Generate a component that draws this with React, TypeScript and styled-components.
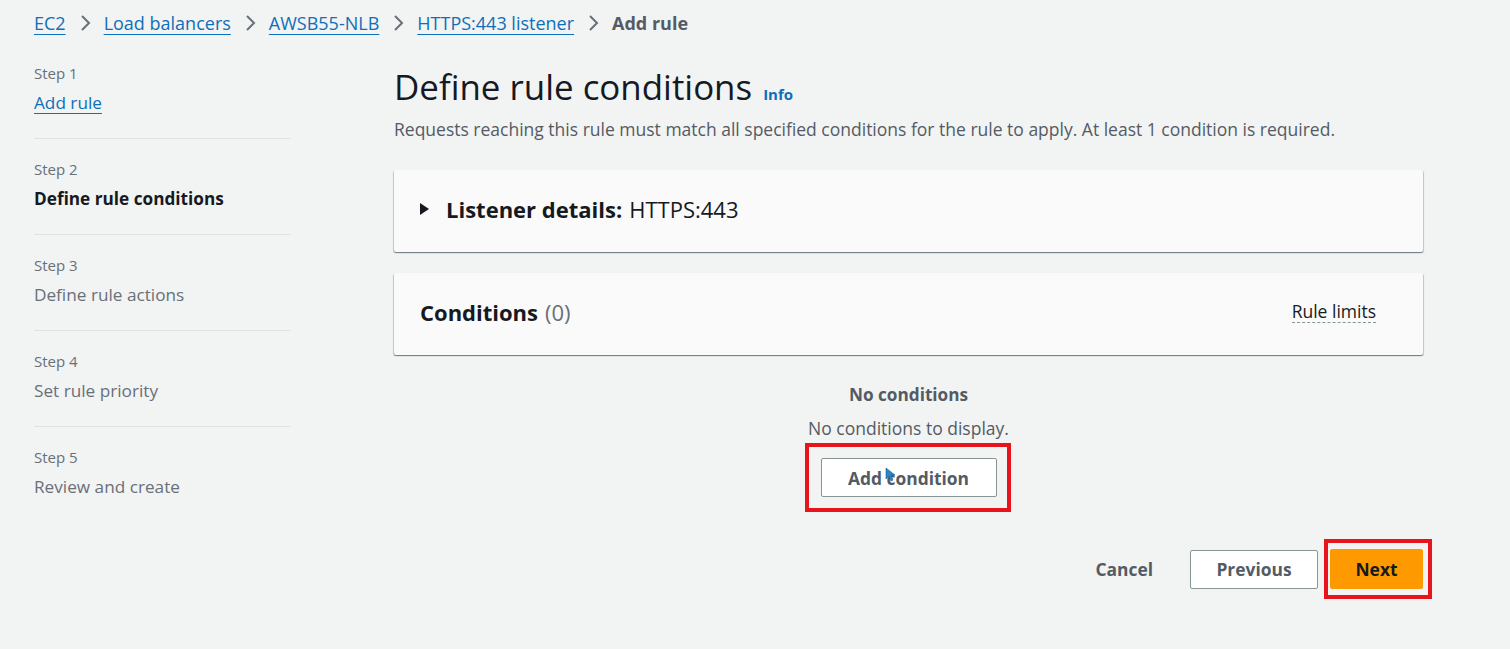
import React from "react";
import styled, { createGlobalStyle } from "styled-components";

const Global = createGlobalStyle`
  html, body { margin: 0; padding: 0; background: #f2f3f3; }
  body { font-family: "Open Sans", "Noto Sans", Arial, sans-serif; color: #16191f; }
  * { box-sizing: border-box; }
`;

const Page = styled.div`
  width: 1510px;
  min-height: 649px;
  padding: 11px 87px 0 34px;
`;

const Breadcrumbs = styled.nav`
  display: flex;
  align-items: center;
  gap: 13px;
  height: 24px;
  font-size: 18px;
  line-height: 24px;
`;

const Crumb = styled.a`
  color: #0f6fb8;
  text-decoration: underline;
  text-underline-offset: 4px;
  text-decoration-thickness: 1px;
`;

const Current = styled.span`
  color: #545b64;
  font-weight: 700;
`;

const Chevron = () => (
  <svg width="12" height="18" viewBox="0 0 12 18">
    <path d="M3 2 L10 9 L3 16" fill="none" stroke="#687078" strokeWidth="2" />
  </svg>
);

const Layout = styled.div`
  display: grid;
  grid-template-columns: 257px 1fr;
  column-gap: 103px;
  margin-top: 27px;
`;

const StepNav = styled.ol`
  list-style: none;
  margin: 0;
  padding: 0;
`;

const StepItem = styled.li`
  padding: 19px 0 22px;
  border-bottom: 1px solid #dfe3e5;
  &:first-child { padding-top: 0; }
  &:last-child { border-bottom: none; }
`;

const StepLabel = styled.div`
  font-size: 15px;
  line-height: 22px;
  color: #687078;
`;

const StepTitle = styled.div<{ $state: "link" | "active" | "idle" }>`
  margin-top: 6px;
  font-size: 17.2px;
  line-height: 26px;
  color: ${(p) => (p.$state === "link" ? "#0f6fb8" : p.$state === "active" ? "#16191f" : "#687078")};
  font-weight: ${(p) => (p.$state === "active" ? 700 : 400)};
  text-decoration: ${(p) => (p.$state === "link" ? "underline" : "none")};
  text-underline-offset: 4px;
`;

const Main = styled.main`
  display: flex;
  flex-direction: column;
  margin-top: 3px;
`;

const TitleRow = styled.div`
  display: flex;
  align-items: baseline;
  gap: 11px;
`;

const Heading = styled.h1`
  margin: 0;
  font-size: 34.9px;
  line-height: 44px;
  font-weight: 400;
  color: #16191f;
`;

const InfoLink = styled.a`
  font-size: 15px;
  font-weight: 700;
  color: #0f6fb8;
`;

const Description = styled.p`
  margin: 8px 0 0;
  font-size: 17.5px;
  line-height: 24px;
  color: #545b64;
`;

const Card = styled.section<{ $gap: number }>`
  margin-top: ${(p) => p.$gap}px;
  height: 82px;
  background: #fafafa;
  border-radius: 2px;
  box-shadow: 0 1px 1px 0 rgba(0, 28, 36, 0.35), 1px 1px 1px 0 rgba(0, 28, 36, 0.18),
    -1px 1px 1px 0 rgba(0, 28, 36, 0.18);
  display: flex;
  align-items: center;
  justify-content: space-between;
  padding: 0 47px 5px 26px;
`;

const CardTitle = styled.h2`
  margin: 0;
  display: flex;
  align-items: center;
  font-size: 22px;
  line-height: 30px;
  font-weight: 700;
  color: #16191f;
`;

const Caret = styled.span`
  width: 0;
  height: 0;
  border-top: 6px solid transparent;
  border-bottom: 6px solid transparent;
  border-left: 9px solid #16191f;
  margin-right: 17px;
`;

const Light = styled.span<{ $muted?: boolean }>`
  font-weight: 400;
  color: ${(p) => (p.$muted ? "#687078" : "#16191f")};
  margin-left: 7px;
`;

const RuleLimits = styled.span`
  font-size: 17.5px;
  color: #16191f;
  border-bottom: 1px dashed #879596;
  line-height: 22px;
`;

const Empty = styled.div`
  display: flex;
  flex-direction: column;
  align-items: center;
  margin-top: 28px;
`;

const EmptyTitle = styled.div`
  font-size: 17.2px;
  line-height: 24px;
  font-weight: 700;
  color: #545b64;
`;

const EmptyText = styled.div`
  margin-top: 9px;
  font-size: 17.5px;
  line-height: 24px;
  color: #545b64;
`;

const Highlight = styled.span`
  position: relative;
  display: inline-flex;
`;

const RedBox = styled.span<{ $t: number; $r: number; $b: number; $l: number }>`
  position: absolute;
  top: ${(p) => -p.$t}px;
  right: ${(p) => -p.$r}px;
  bottom: ${(p) => -p.$b}px;
  left: ${(p) => -p.$l}px;
  border: 4px solid #e8141b;
  pointer-events: none;
`;

const Button = styled.button<{ $variant: "normal" | "primary" | "link"; $w?: number }>`
  height: ${(p) => (p.$variant === "primary" ? 40 : 39)}px;
  width: ${(p) => (p.$w ? `${p.$w}px` : "auto")};
  padding: 0 24px;
  font-family: inherit;
  font-size: 17.4px;
  font-weight: 700;
  border-radius: 2px;
  cursor: pointer;
  border: 1px solid
    ${(p) => (p.$variant === "normal" ? "#879596" : p.$variant === "primary" ? "#ff9900" : "transparent")};
  background: ${(p) => (p.$variant === "normal" ? "#ffffff" : p.$variant === "primary" ? "#ff9900" : "transparent")};
  color: ${(p) => (p.$variant === "primary" ? "#16191f" : "#545b64")};
`;

const AddWrap = styled.div`
  margin-top: 18px;
`;

const Cursor = styled.svg`
  position: absolute;
  left: 64px;
  top: 9px;
`;

const Footer = styled.div`
  display: flex;
  justify-content: flex-end;
  align-items: center;
  gap: 12px;
  margin-top: 52px;
`;

export default function App() {
  const steps: { label: string; title: string; state: "link" | "active" | "idle" }[] = [
    { label: "Step 1", title: "Add rule", state: "link" },
    { label: "Step 2", title: "Define rule conditions", state: "active" },
    { label: "Step 3", title: "Define rule actions", state: "idle" },
    { label: "Step 4", title: "Set rule priority", state: "idle" },
    { label: "Step 5", title: "Review and create", state: "idle" },
  ];
  return (
    <>
      <Global />
      <Page>
        <Breadcrumbs>
          <Crumb>EC2</Crumb>
          <Chevron />
          <Crumb>Load balancers</Crumb>
          <Chevron />
          <Crumb>AWSB55-NLB</Crumb>
          <Chevron />
          <Crumb>HTTPS:443 listener</Crumb>
          <Chevron />
          <Current>Add rule</Current>
        </Breadcrumbs>
        <Layout>
          <StepNav>
            {steps.map((s) => (
              <StepItem key={s.label}>
                <StepLabel>{s.label}</StepLabel>
                <StepTitle $state={s.state}>{s.title}</StepTitle>
              </StepItem>
            ))}
          </StepNav>
          <Main>
            <TitleRow>
              <Heading>Define rule conditions</Heading>
              <InfoLink>Info</InfoLink>
            </TitleRow>
            <Description>
              Requests reaching this rule must match all specified conditions for the rule to apply. At least 1
              condition is required.
            </Description>
            <Card $gap={29}>
              <CardTitle>
                <Caret />
                Listener details:<Light>HTTPS:443</Light>
              </CardTitle>
            </Card>
            <Card $gap={21}>
              <CardTitle>
                Conditions<Light $muted>(0)</Light>
              </CardTitle>
              <RuleLimits>Rule limits</RuleLimits>
            </Card>
            <Empty>
              <EmptyTitle>No conditions</EmptyTitle>
              <EmptyText>No conditions to display.</EmptyText>
              <AddWrap>
                <Highlight>
                  <Button $variant="normal" $w={176}>Add condition</Button>
                  <Cursor width="10" height="15" viewBox="0 0 10 15">
                    <path d="M1 1 L1 12 L4 9 L6 14 L8 13 L6 8 L10 8 Z" fill="#2a86c7" stroke="#1b5f8f" strokeWidth="0.6" />
                  </Cursor>
                  <RedBox $t={15} $r={14} $b={15} $l={16} />
                </Highlight>
              </AddWrap>
            </Empty>
            <Footer>
              <Button $variant="link">Cancel</Button>
              <Button $variant="normal" $w={128}>Previous</Button>
              <Highlight>
                <Button $variant="primary" $w={93}>Next</Button>
                <RedBox $t={10} $r={9} $b={10} $l={6} />
              </Highlight>
            </Footer>
          </Main>
        </Layout>
      </Page>
    </>
  );
}
